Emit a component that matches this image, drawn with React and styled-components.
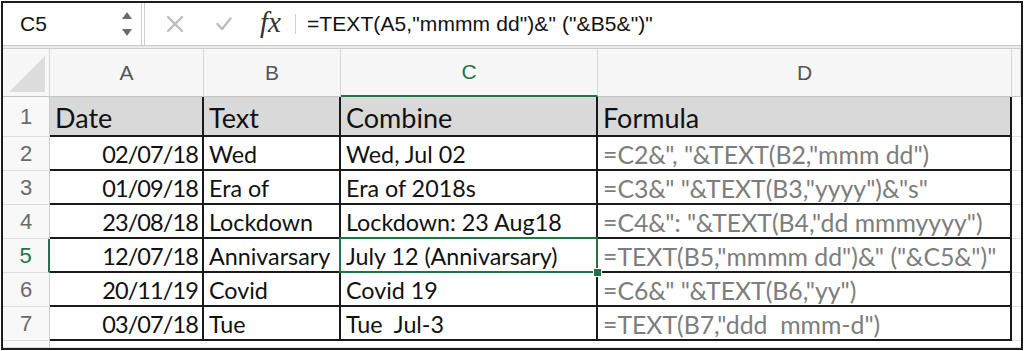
import styled, { createGlobalStyle, css } from "styled-components";

const GlobalStyle = createGlobalStyle`
  body {
    margin: 0;
    background: #ffffff;
  }
`;

const GREEN = "#1f7346";

const Frame = styled.div`
  box-sizing: border-box;
  width: 1022px;
  height: 349px;
  margin: 1px;
  border: 2px solid #1c1c1c;
  display: flex;
  flex-direction: column;
  overflow: hidden;
  background: #ffffff;
`;

const FormulaBar = styled.div`
  height: 42px;
  flex: none;
  display: flex;
  align-items: center;
  background: #ffffff;
  font-family: "Liberation Sans", Arial, sans-serif;
  font-size: 21px;
  color: #111;
`;

const NameBox = styled.div`
  box-sizing: border-box;
  width: 142px;
  height: 100%;
  padding: 0 8px 0 17px;
  display: flex;
  align-items: center;
  justify-content: space-between;
  border-right: 4px double #cfcfcf;
`;

const Spinner = styled.svg`
  width: 12px;
  height: 26px;
`;

const IconSlot = styled.div`
  display: flex;
  align-items: center;
  justify-content: center;
  width: ${(p) => p.$w}px;
  margin-left: ${(p) => p.$ml}px;
`;

const Fx = styled.span`
  font-family: "Liberation Serif", "DejaVu Serif", serif;
  font-style: italic;
  font-size: 29px;
  color: #333;
  margin-left: 26px;
  margin-top: -3px;
`;

const Divider = styled.div`
  width: 1px;
  height: 20px;
  background: #d0d0d0;
  margin: 0 11px 0 14px;
`;

const FormulaText = styled.span`
  white-space: pre;
  letter-spacing: 0.1px;
`;

const Strip = styled.div`
  height: 4px;
  flex: none;
  background: #ececec;
  border-top: 1px solid #c9c9c9;
  border-bottom: 1px solid #cdcdcd;
  box-sizing: border-box;
`;

const Sheet = styled.div`
  flex: 1;
  display: grid;
  grid-template-columns: 47px 154px 137px 257px 414px 1fr;
  grid-template-rows: 48px 40px repeat(6, 34px) 1fr;
  font-family: Lato, "Liberation Sans", sans-serif;
`;

const Corner = styled.div`
  position: relative;
  background: #f7f7f7;
  border-right: 1px solid #d6d6d6;
  border-bottom: 1px solid #c4c4c4;
`;

const CornerTriangle = styled.svg`
  position: absolute;
  right: 4px;
  bottom: 4px;
`;

const ColHead = styled.div`
  box-sizing: border-box;
  display: flex;
  align-items: center;
  justify-content: center;
  background: #f7f7f7;
  border-right: 1px solid #d9d9d9;
  border-bottom: 1px solid #c4c4c4;
  font-family: "Liberation Sans", Arial, sans-serif;
  font-size: 21px;
  color: #555;
  ${(p) =>
    p.$active &&
    css`
      color: ${GREEN};
      border-bottom: 2px solid ${GREEN};
    `}
`;

const RowHead = styled.div`
  box-sizing: border-box;
  display: flex;
  align-items: center;
  justify-content: center;
  background: #f8f8f8;
  border-right: 1px solid #cccccc;
  border-bottom: 1px solid #dddddd;
  font-family: "Liberation Sans", Arial, sans-serif;
  font-size: 22px;
  color: #6a6a6a;
  ${(p) =>
    p.$active &&
    css`
      color: ${GREEN};
      border-right: 2px solid ${GREEN};
    `}
`;

const sizes = { head: "27px", date: "23.5px", text: "23.3px", formula: "24.8px" };

const Cell = styled.div`
  box-sizing: border-box;
  position: relative;
  display: flex;
  align-items: center;
  justify-content: ${(p) => (p.$kind === "date" ? "flex-end" : "flex-start")};
  padding: 2px 4px 0 5px;
  white-space: pre;
  border-right: 2px solid #1a1a1a;
  border-bottom: 2px solid #1a1a1a;
  background: ${(p) => (p.$kind === "head" ? "#d9d9d9" : "#ffffff")};
  font-size: ${(p) => sizes[p.$kind]};
  letter-spacing: ${(p) => (p.$kind === "date" ? "-0.9px" : "0")};
  color: ${(p) => (p.$kind === "formula" ? "#7d7d7d" : "#111")};
`;

const Blank = styled.div`
  box-sizing: border-box;
  border-bottom: 1px solid #e3e3e3;
  background: #ffffff;
`;

const Selection = styled.div`
  position: absolute;
  z-index: 2;
  left: -2px;
  top: -2px;
  right: -2px;
  bottom: -2px;
  border: 2px solid ${GREEN};
  pointer-events: none;

  &::after {
    content: "";
    position: absolute;
    right: -6px;
    bottom: -6px;
    width: 7px;
    height: 7px;
    background: ${GREEN};
    border: 1px solid #ffffff;
  }
`;

const rows = [
  ["Date", "Text", "Combine", "Formula"],
  ["02/07/18", "Wed", "Wed, Jul 02", '=C2&", "&TEXT(B2,"mmm dd")'],
  ["01/09/18", "Era of", "Era of 2018s", '=C3&" "&TEXT(B3,"yyyy")&"s"'],
  ["23/08/18", "Lockdown", "Lockdown: 23 Aug18", '=C4&": "&TEXT(B4,"dd mmmyyyy")'],
  ["12/07/18", "Annivarsary", "July 12 (Annivarsary)", '=TEXT(B5,"mmmm dd")&" ("&C5&")"'],
  ["20/11/19", "Covid", "Covid 19", '=C6&" "&TEXT(B6,"yy")'],
  ["03/07/18", "Tue", "Tue  Jul-3", '=TEXT(B7,"ddd  mmm-d")'],
];

const kindOf = (i, j) => {
  if (i === 0) return "head";
  if (j === 0) return "date";
  if (j === 3) return "formula";
  return "text";
};

const App = () => {
  return (
    <>
      <GlobalStyle />
      <Frame>
        <FormulaBar>
          <NameBox>
            <span>C5</span>
            <Spinner viewBox="0 0 12 26">
              <path d="M6 1 L11 8 H1 Z" fill="#6b6b6b" />
              <path d="M6 25 L11 18 H1 Z" fill="#6b6b6b" />
            </Spinner>
          </NameBox>
          <IconSlot $w={20} $ml={20}>
            <svg width="18" height="18" viewBox="0 0 18 18">
              <path d="M2 2 L16 16 M16 2 L2 16" stroke="#bdbdbd" strokeWidth="2.4" strokeLinecap="round" />
            </svg>
          </IconSlot>
          <IconSlot $w={20} $ml={29}>
            <svg width="16" height="14" viewBox="0 0 16 14">
              <path d="M1.5 7 L6 12 L14.5 1.5" stroke="#bdbdbd" strokeWidth="2.4" fill="none" strokeLinecap="round" strokeLinejoin="round" />
            </svg>
          </IconSlot>
          <Fx>fx</Fx>
          <Divider />
          <FormulaText>=TEXT(A5,"mmmm dd")&amp;" ("&amp;B5&amp;")"</FormulaText>
        </FormulaBar>
        <Strip />
        <Sheet>
          <Corner>
            <CornerTriangle width="36" height="36" viewBox="0 0 36 36">
              <path d="M36 0 V36 H0 Z" fill="#dcdcdc" />
            </CornerTriangle>
          </Corner>
          {["A", "B", "C", "D"].map((l) => (
            <ColHead key={l} $active={l === "C"}>
              {l}
            </ColHead>
          ))}
          <ColHead />
          {rows.map((r, i) => (
            <>
              <RowHead key={"h" + i} $active={i === 4}>
                {i + 1}
              </RowHead>
              {r.map((v, j) => (
                <Cell key={i + "-" + j} $kind={kindOf(i, j)}>
                  {v}
                  {i === 4 && j === 2 && <Selection />}
                </Cell>
              ))}
              <Blank key={"e" + i} />
            </>
          ))}
          <RowHead />
          <Blank />
          <Blank />
          <Blank />
          <Blank />
          <Blank />
        </Sheet>
      </Frame>
    </>
  );
};

export default App;
